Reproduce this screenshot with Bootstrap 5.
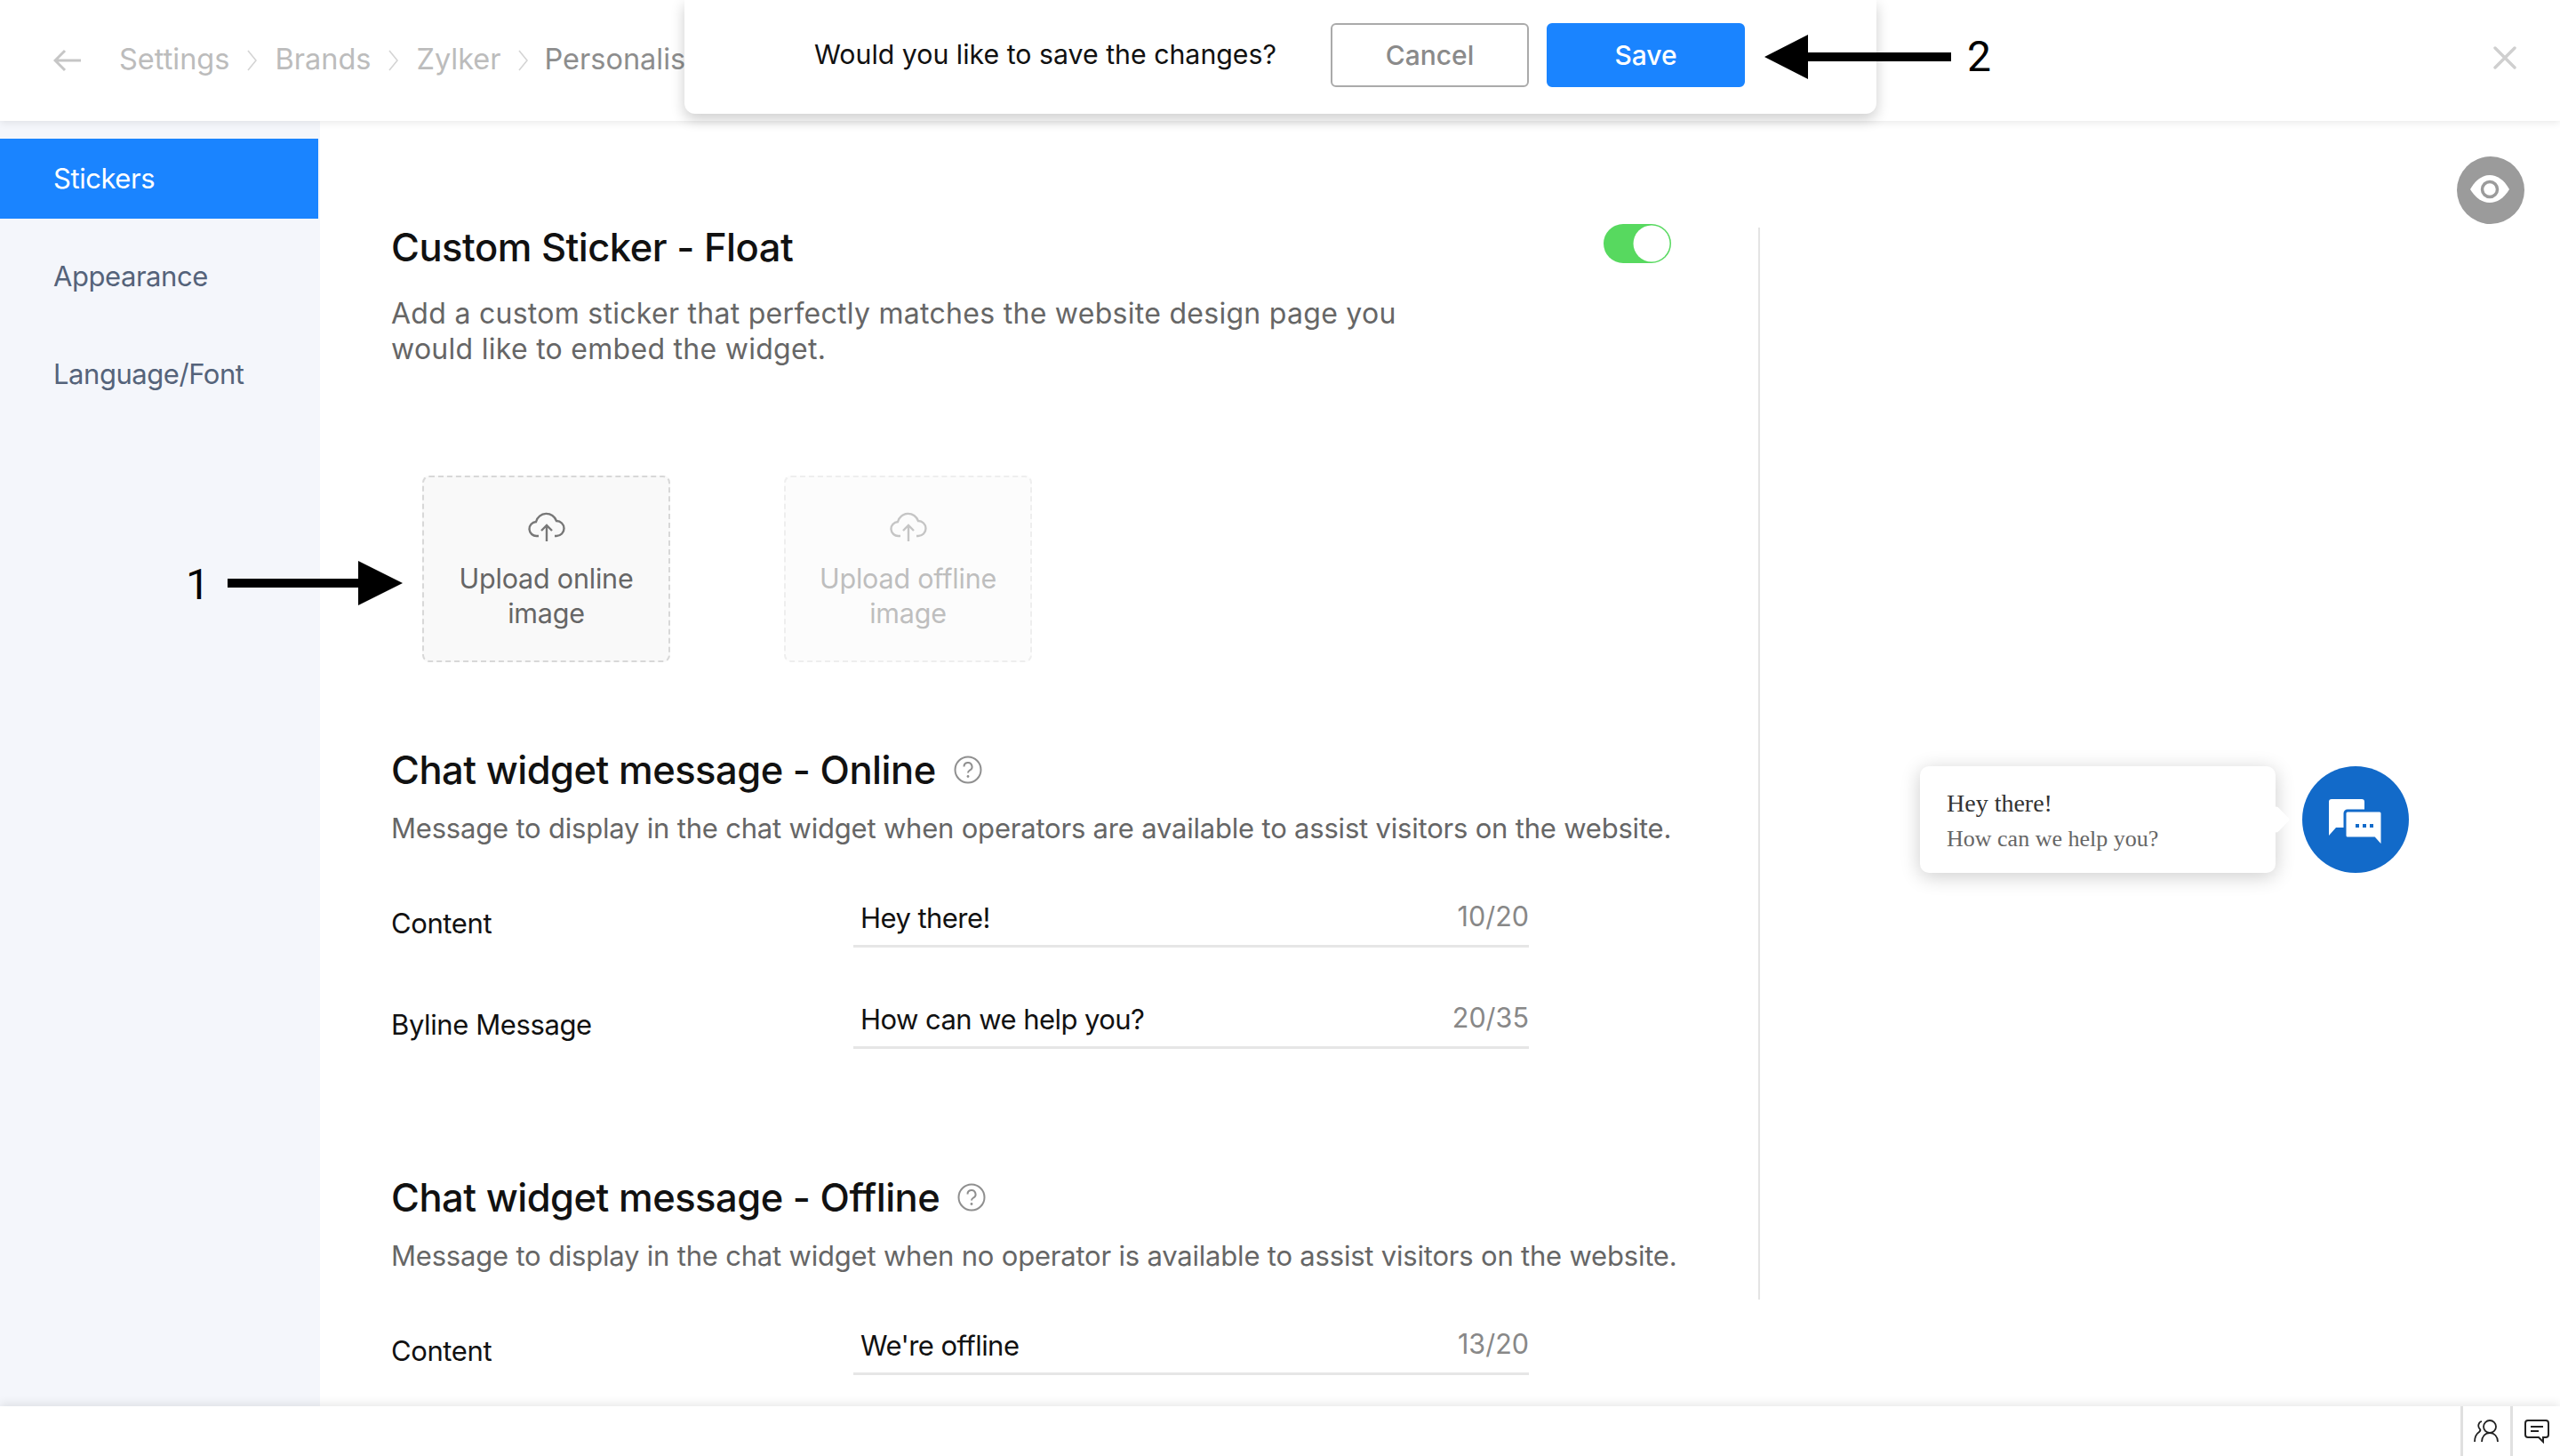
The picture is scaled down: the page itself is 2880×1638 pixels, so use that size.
<!DOCTYPE html>
<html lang="en">
<head>
<meta charset="utf-8">
<title>Custom Sticker</title>
<link href="https://cdn.jsdelivr.net/npm/bootstrap@5.3.0/dist/css/bootstrap.min.css" rel="stylesheet">
<style>
html,body{height:100%;}
body{font-family:Inter,"Liberation Sans",sans-serif;font-size:32px;color:#111;overflow:hidden;background:#fff;}
.page-wrap{height:1638px;width:2880px;}
.top-bar{height:136px;flex:none;padding-left:60px;box-shadow:0 2px 8px rgba(0,0,0,.09);z-index:2;background:#fff;}
.crumb-text{color:#bcbcbc;line-height:40px;font-size:32.5px;margin-top:-2px;}
.crumb-last{color:#8d8d8d;margin-left:-2px;}
.crumb-sep{margin:0 20px;width:11px;height:24px;flex:none;}
.back-arrow{width:32px;height:26px;margin-right:42px;flex:none;}
.close-x{position:absolute;right:49px;top:52px;width:26px;height:26px;}
.save-pop{position:absolute;left:770px;top:0;width:1341px;height:128px;background:#fff;border-radius:0 0 12px 12px;box-shadow:0 6px 16px rgba(0,0,0,.2);z-index:3;padding-left:146px;padding-bottom:4px;}
.save-q{width:581px;font-size:30.3px;color:#111;}
.btn-cancel-x,.btn-save-x{width:223px;height:72px;font-size:30px;font-weight:500;border-radius:6px;padding:0;}
.btn-cancel-x{background:#fff;border:2px solid #aaa;color:#8a8a8a;}
.btn-save-x{background:#1a84ff;border:2px solid #1a84ff;color:#fff;margin-left:20px;}
.mid-area{flex:1 1 auto;min-height:0;overflow:hidden;}
.side-nav{width:360px;flex:none;background:#f4f6fb;padding-top:20px;padding-right:2px;}
.side-item{height:90px;margin-bottom:20px;padding-left:60px;color:#55637a;line-height:90px;font-size:31px;letter-spacing:-.45px;}
.side-on{background:#1a84ff;color:#fff;}
.main-col{width:1618px;flex:none;padding:0 98px 0 80px;}
.ttl-row{margin-top:116px;}
.top-title{margin-top:-2px;}
.sec-title{font-size:43.5px;font-weight:500;letter-spacing:-.5px;line-height:56px;color:#111;}
.sec-desc{color:#666;font-size:32px;line-height:40px;letter-spacing:.28px;margin:0;}
.first-desc{margin-top:27px;width:1180px;}
.up-row{margin-top:122px;margin-left:35px;gap:128px;}
.up-box{width:279px;height:210px;background:#f9f9f9;border:2px dashed #d8d8d8;border-radius:8px;color:#666;font-size:30.500px;letter-spacing:-.2px;line-height:39px;text-align:center;padding-top:37px;}
.up-off{opacity:.42;}
.up-ico{width:42px;height:36px;display:block;margin:0 auto 21px;}
.help-ico{width:32px;height:32px;margin-left:20px;flex:none;}
.online-head{margin-top:93px;}
.offline-head{margin-top:132px;}
.head-desc{margin-top:18px;white-space:nowrap;font-size:31px;letter-spacing:-.2px;}
.fld-row{height:62px;}
.fld-label{width:520px;flex:none;font-size:31px;letter-spacing:-.4px;line-height:40px;padding-top:8px;}
.fld-box{width:760px;flex:none;border-bottom:3px solid #e6e6e6;padding:0 0 0 8px;height:55px;font-size:31px;letter-spacing:-.55px;line-height:40px;}
.fld-val{margin-top:2px;}
.fld-count{color:#888;font-size:30.5px;letter-spacing:0;}
.form-one{margin-top:59px;}
.form-gap{margin-top:52px;}
.v-rule{width:2px;height:1206px;background:#e4e4e4;margin-top:120px;flex:none;}
.prev-col{flex:1 1 auto;}
.eye-btn{width:76px;height:76px;border-radius:50%;background:#9b9b9b;margin:40px 40px 0 0;align-self:flex-end;}
.eye-btn svg{width:76px;height:76px;display:block;}
.chat-prev{margin:610px 0 0 180px;gap:30px;}
.chat-bub{position:relative;width:400px;height:120px;background:#fff;border-radius:10px;box-shadow:0 4px 22px rgba(0,0,0,.2);padding:24px 30px;font-family:"Liberation Serif",serif;}
.chat-bub::after{content:"";position:absolute;right:-12px;top:49px;width:22px;height:22px;background:#fff;transform:rotate(45deg);border-radius:3px;}
.bub-a{font-size:28px;line-height:36px;color:#333;}
.bub-b{font-size:26px;line-height:36px;color:#666;margin-top:4px;}
.chat-round{width:120px;height:120px;border-radius:50%;background:#126ac9;flex:none;}
.chat-round svg{width:120px;height:120px;display:block;}
.foot-bar{height:56px;flex:none;box-shadow:0 -3px 10px rgba(0,0,0,.09);background:#fff;z-index:2;}
.foot-cell{width:56px;height:56px;border-left:3px solid #e0e0e0;}
.foot-cell svg{width:32px;height:28px;}
.mark-arrow{position:absolute;z-index:4;}
.mark-num{position:absolute;z-index:4;font-family:Roboto,"Liberation Sans",sans-serif;font-size:48px;line-height:48px;color:#000;}
.arrow-one{left:256px;top:631px;width:197px;height:50px;}
.arrow-two{left:1985px;top:39px;width:210px;height:50px;}
.num-one{left:209px;top:634px;}
.num-two{left:2213px;top:40px;}
</style>
</head>
<body>
<div class="page-wrap d-flex flex-column position-relative">
  <header class="top-bar d-flex align-items-center position-relative">
    <svg class="back-arrow" viewBox="0 0 32 26"><path d="M31 13H3M13 2 2 13l11 11" fill="none" stroke="#c6c6c6" stroke-width="3"/></svg>
    <span class="crumb-text">Settings</span>
    <svg class="crumb-sep" viewBox="0 0 11 24"><path d="M1 1l9 11-9 11" fill="none" stroke="#d4d4d4" stroke-width="1.6"/></svg>
    <span class="crumb-text">Brands</span>
    <svg class="crumb-sep" viewBox="0 0 11 24"><path d="M1 1l9 11-9 11" fill="none" stroke="#d4d4d4" stroke-width="1.6"/></svg>
    <span class="crumb-text">Zylker</span>
    <svg class="crumb-sep" viewBox="0 0 11 24"><path d="M1 1l9 11-9 11" fill="none" stroke="#d4d4d4" stroke-width="1.6"/></svg>
    <span class="crumb-text crumb-last">Personalise</span>
    <svg class="close-x" viewBox="0 0 26 26"><path d="M2 2l22 22M24 2 2 24" stroke="#cfcfcf" stroke-width="3.4" stroke-linecap="round"/></svg>
  </header>

  <div class="save-pop d-flex align-items-center">
    <div class="save-q">Would you like to save the changes?</div>
    <button type="button" class="btn btn-cancel-x">Cancel</button>
    <button type="button" class="btn btn-save-x">Save</button>
  </div>

  <div class="mid-area d-flex">
    <nav class="side-nav">
      <div class="side-item side-on">Stickers</div>
      <div class="side-item">Appearance</div>
      <div class="side-item">Language/Font</div>
    </nav>

    <main class="main-col">
      <div class="ttl-row d-flex justify-content-between align-items-start">
        <div>
          <h1 class="sec-title top-title mb-0">Custom Sticker - Float</h1>
          <p class="sec-desc first-desc">Add a custom sticker that perfectly matches the website design page you would like to embed the widget.</p>
        </div>
        <svg width="76" height="44" viewBox="0 0 76 44" class="flex-none"><rect width="76" height="44" rx="22" fill="#57d95f"/><circle cx="54" cy="22" r="20.5" fill="#fff"/></svg>
      </div>

      <div class="up-row d-flex">
        <div class="up-box">
          <svg class="up-ico" viewBox="0 0 42 36"><path d="M12 29H10A8 8 0 0 1 9 13 12 12 0 0 1 32 12 8.500 8.500 0 0 1 32 29H30M21 35V17M15 23l6-6 6 6" fill="none" stroke="#777" stroke-width="2.400"/></svg>
          Upload online<br>image
        </div>
        <div class="up-box up-off">
          <svg class="up-ico" viewBox="0 0 42 36"><path d="M12 29H10A8 8 0 0 1 9 13 12 12 0 0 1 32 12 8.500 8.500 0 0 1 32 29H30M21 35V17M15 23l6-6 6 6" fill="none" stroke="#777" stroke-width="2.400"/></svg>
          Upload offline<br>image
        </div>
      </div>

      <div class="online-head d-flex align-items-center">
        <h2 class="sec-title mb-0">Chat widget message - Online</h2>
        <svg class="help-ico" viewBox="0 0 32 32"><circle cx="16" cy="16" r="14.500" fill="none" stroke="#8f8f8f" stroke-width="2"/><path d="M11.500 12.500a4.500 4.500 0 1 1 6.500 4c-1.400.8-2 1.500-2 3" fill="none" stroke="#8f8f8f" stroke-width="2"/><circle cx="16" cy="23.500" r="1.400" fill="#8f8f8f"/></svg>
      </div>
      <p class="sec-desc head-desc">Message to display in the chat widget when operators are available to assist visitors on the website.</p>
      <div class="fld-row form-one d-flex">
        <div class="fld-label">Content</div>
        <div class="fld-box d-flex justify-content-between"><span class="fld-val">Hey there!</span><span class="fld-count">10/20</span></div>
      </div>
      <div class="fld-row form-gap d-flex">
        <div class="fld-label">Byline Message</div>
        <div class="fld-box d-flex justify-content-between"><span class="fld-val">How can we help you?</span><span class="fld-count">20/35</span></div>
      </div>

      <div class="offline-head d-flex align-items-center">
        <h2 class="sec-title mb-0">Chat widget message - Offline</h2>
        <svg class="help-ico" viewBox="0 0 32 32"><circle cx="16" cy="16" r="14.500" fill="none" stroke="#8f8f8f" stroke-width="2"/><path d="M11.500 12.500a4.500 4.500 0 1 1 6.500 4c-1.400.8-2 1.500-2 3" fill="none" stroke="#8f8f8f" stroke-width="2"/><circle cx="16" cy="23.500" r="1.400" fill="#8f8f8f"/></svg>
      </div>
      <p class="sec-desc head-desc">Message to display in the chat widget when no operator is available to assist visitors on the website.</p>
      <div class="fld-row form-one d-flex">
        <div class="fld-label">Content</div>
        <div class="fld-box d-flex justify-content-between"><span class="fld-val">We're offline</span><span class="fld-count">13/20</span></div>
      </div>
    </main>

    <div class="v-rule"></div>

    <aside class="prev-col d-flex flex-column">
      <div class="eye-btn">
        <svg viewBox="0 0 76 76"><path d="M15 37C21 26 29 21 37 21s16 5 22 16C53 47 45 52 37 52S21 47 15 37Z" fill="#fff"/><circle cx="37" cy="37" r="8.500" fill="none" stroke="#9b9b9b" stroke-width="3.500"/></svg>
      </div>
      <div class="chat-prev d-flex">
        <div class="chat-bub">
          <div class="bub-a">Hey there!</div>
          <div class="bub-b">How can we help you?</div>
        </div>
        <div class="chat-round">
          <svg viewBox="0 0 120 120">
            <path d="M33 37H67a3 3 0 0 1 3 3V66a3 3 0 0 1-3 3H38l-8 9V40a3 3 0 0 1 3-3Z" fill="#fff"/>
            <path d="M51 50H87a3 3 0 0 1 3 3V78l0 13-9-10H51a3 3 0 0 1-3-3V53a3 3 0 0 1 3-3Z" fill="#fff" stroke="#126ac9" stroke-width="3"/>
            <path d="M60 65h4v4h-4zM68 65h4v4h-4zM76 65h4v4h-4z" fill="#126ac9"/>
          </svg>
        </div>
      </div>
    </aside>
  </div>

  <footer class="foot-bar d-flex justify-content-end">
    <div class="foot-cell d-flex align-items-center justify-content-center">
      <svg viewBox="0 0 32 28"><circle cx="19" cy="9" r="7" fill="none" stroke="#222" stroke-width="1.800"/><path d="M10 26c0-6 4-10 9-10s9 4 9 10M10 3C6 4 5 9 8 12c1 1 0 2-1 3-3 2-5 6-5 11" fill="none" stroke="#222" stroke-width="1.800"/></svg>
    </div>
    <div class="foot-cell d-flex align-items-center justify-content-center">
      <svg viewBox="0 0 32 28"><path d="M6 2H26a3 3 0 0 1 3 3V18a3 3 0 0 1-3 3H23v5l-5-5H6a3 3 0 0 1-3-3V5a3 3 0 0 1 3-3Z" fill="none" stroke="#222" stroke-width="2"/><path d="M9 9H23M9 14H18" stroke="#222" stroke-width="2"/></svg>
    </div>
  </footer>

  <svg class="mark-arrow arrow-one" viewBox="0 0 197 50"><path d="M0 20H147V0L197 25 147 50V30H0Z" fill="#000"/></svg>
  <div class="mark-num num-one">1</div>
  <svg class="mark-arrow arrow-two" viewBox="0 0 210 50"><path d="M210 20H49V0L0 25 49 50V30H210Z" fill="#000"/></svg>
  <div class="mark-num num-two">2</div>
</div>
<script src="https://cdn.jsdelivr.net/npm/bootstrap@5.3.0/dist/js/bootstrap.bundle.min.js"></script>
</body>
</html>
